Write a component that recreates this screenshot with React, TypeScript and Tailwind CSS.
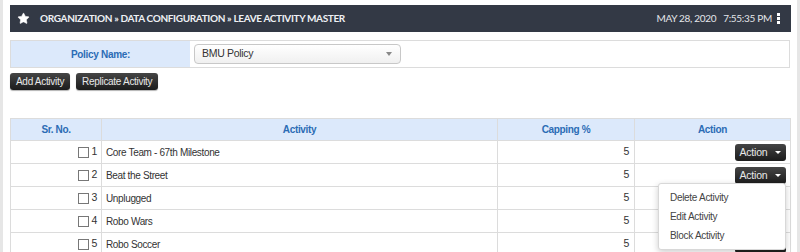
import { Star } from "lucide-react";

const rows = [
  { id: 1, name: "Core Team - 67th Milestone", cap: 5 },
  { id: 2, name: "Beat the Street", cap: 5 },
  { id: 3, name: "Unplugged", cap: 5 },
  { id: 4, name: "Robo Wars", cap: 5 },
  { id: 5, name: "Robo Soccer", cap: 5 },
];

function DarkButton({ children }: { children: React.ReactNode }) {
  return (
    <button className="flex h-[17px] items-center rounded-[3px] bg-gradient-to-b from-[#454545] to-[#1c1c1c] px-[6px] text-[10px] leading-none tracking-[-0.3px] text-[#e8e8e8] shadow-[0_1px_1px_rgba(0,0,0,0.3)]">
      {children}
    </button>
  );
}

function ActionButton() {
  return (
    <button className="flex h-[17px] w-[51px] items-center justify-center gap-[8px] rounded-[3px] bg-gradient-to-b from-[#454545] to-[#1c1c1c] text-[10.5px] leading-none tracking-[-0.2px] text-[#e8e8e8]">
      Action
      <span className="h-0 w-0 border-x-[3px] border-t-[3px] border-x-transparent border-t-white" />
    </button>
  );
}

export default function App() {
  return (
    <div
      className="h-[252px] w-[800px] overflow-hidden bg-[#e6e6e6] px-[3px]"
      style={{ fontFamily: "'Liberation Sans', Arial, sans-serif" }}
    >
      <div className="h-full bg-white px-[7px] pt-[5px]">
        <div className="flex h-[27px] w-[781px] items-center bg-[#333945] pl-[7px] pr-[11px] text-white">
          <Star size={13} fill="white" strokeWidth={1} />
          <span
            className="ml-[10px] text-[10px] font-bold tracking-[-0.35px] text-[#eef0f4]"
            style={{ fontFamily: "Lato, sans-serif" }}
          >
            ORGANIZATION » DATA CONFIGURATION » LEAVE ACTIVITY MASTER
          </span>
          <span
            className="ml-auto text-[10px] tracking-[-0.3px] text-[#e3e6ea]"
            style={{ fontFamily: "Lato, sans-serif" }}
          >
            MAY 28, 2020&nbsp;&nbsp;&nbsp;7:55:35 PM
          </span>
          <span className="ml-[5px] flex flex-col gap-[1px]">
            <span className="h-[3px] w-[3px] bg-white" />
            <span className="h-[3px] w-[3px] bg-white" />
            <span className="h-[3px] w-[3px] bg-white" />
          </span>
        </div>

        <div className="mt-[8px] flex h-[28px] w-[780px] border border-[#dcdcdc]">
          <div className="flex w-[179px] items-center justify-center bg-[#dce9fb] text-[10px] font-bold tracking-[-0.3px] text-[#2b6cb5]">
            Policy Name:
          </div>
          <div className="flex items-center pl-[4px]">
            <div className="flex h-[20px] w-[207px] items-center justify-between rounded-[4px] border border-[#c8c8c8] bg-gradient-to-b from-white to-[#f0f0f0] pl-[7px] pr-[8px] text-[10.5px] tracking-[-0.3px] text-[#333]">
              BMU Policy
              <span className="h-0 w-0 border-x-[3px] border-t-[4px] border-x-transparent border-t-[#888]" />
            </div>
          </div>
        </div>

        <div className="mt-[5px] flex gap-[6px]">
          <DarkButton>Add Activity</DarkButton>
          <DarkButton>Replicate Activity</DarkButton>
        </div>

        <div className="relative mt-[28px] w-[781px]">
          <table className="w-full border-collapse text-[10px] tracking-[-0.35px] text-[#333]">
            <thead>
              <tr className="h-[22px] bg-[#dce9fb] font-bold text-[#2b6cb5]">
                <th className="w-[91px] border border-[#dcdcdc]">Sr. No.</th>
                <th className="w-[396px] border border-[#dcdcdc]">Activity</th>
                <th className="w-[137px] border border-[#dcdcdc]">Capping %</th>
                <th className="border border-[#dcdcdc]">Action</th>
              </tr>
            </thead>
            <tbody>
              {rows.map((r) => (
                <tr key={r.id} className="h-[23px]">
                  <td className="border border-[#dcdcdc] pr-[4px]">
                    <div className="flex items-center justify-end gap-[3px] text-[10.5px]">
                      <span className="h-[11px] w-[11px] border border-[#777] bg-white" />
                      {r.id}
                    </div>
                  </td>
                  <td className="border border-[#dcdcdc] pl-[4px]">{r.name}</td>
                  <td className="border border-[#dcdcdc] pr-[5px] text-right text-[10.5px]">{r.cap}</td>
                  <td className="border border-[#dcdcdc] pr-[4px]">
                    <div className="flex justify-end">
                      <ActionButton />
                    </div>
                  </td>
                </tr>
              ))}
            </tbody>
          </table>

          <div className="absolute left-[648px] top-[65px] w-[128px] rounded-[3px] border border-[#d8d8d8] bg-white py-[4px] text-[10px] tracking-[-0.3px] text-[#444] shadow-[0_2px_6px_rgba(0,0,0,0.2)]">
            <div className="h-[19px] pl-[11px] leading-[19px]">Delete Activity</div>
            <div className="h-[19px] pl-[11px] leading-[19px]">Edit Activity</div>
            <div className="h-[19px] pl-[11px] leading-[19px]">Block Activity</div>
          </div>
        </div>
      </div>
    </div>
  );
}
